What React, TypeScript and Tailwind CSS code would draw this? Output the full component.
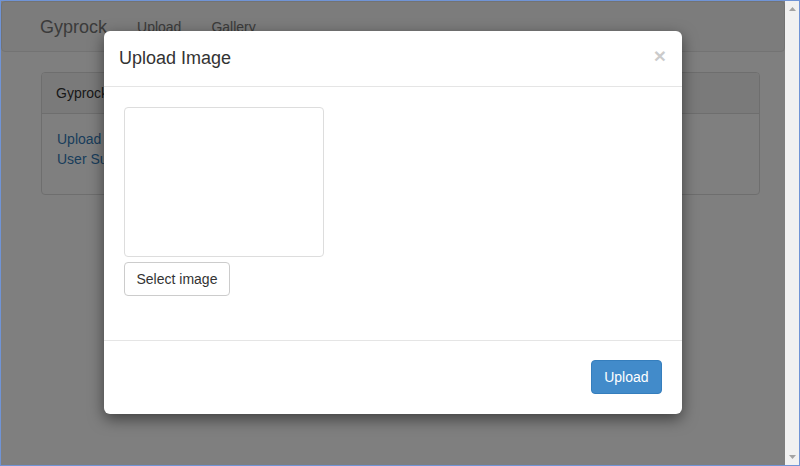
const FONT = "font-['Liberation_Sans',Arial,sans-serif]";

function Page() {
  return (
    <div>
      <nav className="flex h-[51px] items-center rounded-[4px] border border-[#e7e7e7] bg-[#f8f8f8]">
        <a className="pl-[38px] pr-[15px] text-[18px] leading-[20px] text-[#777]">Gyprock</a>
        <a className="px-[15px] leading-[20px] text-[#777]">Upload</a>
        <a className="px-[15px] leading-[20px] text-[#777]">Gallery</a>
      </nav>
      <div className="ml-[40px] mt-[20px] w-[719px] rounded-[4px] border border-[#ddd] bg-white">
        <div className="rounded-t-[3px] border-b border-[#ddd] bg-[#f5f5f5] px-[14px] py-[10px] leading-[20px] text-[#333]">
          Gyprock Image Uploader
        </div>
        <div className="p-[15px]">
          <ul className="mb-[10px] leading-[20px] text-[#337ab7]">
            <li>
              <a>Upload Image</a>
            </li>
            <li>
              <a>User Submissions</a>
            </li>
          </ul>
        </div>
      </div>
    </div>
  );
}

function Modal() {
  return (
    <div className="absolute left-[103px] top-[30px] w-[578px] rounded-[6px] bg-white shadow-[0_5px_15px_rgba(0,0,0,0.5)]">
      <div className="flex h-[56px] items-center justify-between border-b border-[#e5e5e5] pl-[15px] pr-[16px]">
        <h4 className="-mt-[1px] text-[18px] leading-[26px] text-[#333]">Upload Image</h4>
        <button className="-mt-[6px] text-[21px] font-bold leading-none text-black opacity-20">×</button>
      </div>
      <div className="px-[20px] pb-[44px] pt-[20px]">
        <div className="h-[150px] w-[200px] rounded-[4px] border border-[#ddd] bg-white" />
        <button className="mt-[5px] h-[34px] rounded-[4px] border border-[#ccc] bg-white px-[11.5px] text-[14px] text-[#333]">
          Select image
        </button>
      </div>
      <div className="flex justify-end border-t border-[#e5e5e5] pb-[20px] pr-[20px] pt-[19px]">
        <button className="h-[34px] rounded-[4px] border border-[#357ebd] bg-[#428bca] px-[12.5px] text-[14px] text-white">
          Upload
        </button>
      </div>
    </div>
  );
}

function Scrollbar() {
  return (
    <div className="flex w-[14px] flex-col items-center justify-between bg-[#f1f1f1] py-[6px]">
      <svg width="7" height="4" viewBox="0 0 7 4">
        <path d="M3.5 0L7 4H0z" fill="#a3a3a3" />
      </svg>
      <svg width="7" height="4" viewBox="0 0 7 4">
        <path d="M0 0h7L3.5 4z" fill="#a3a3a3" />
      </svg>
    </div>
  );
}

export default function App() {
  return (
    <div className={`h-[466px] w-[800px] overflow-hidden border border-[#7094d6] bg-white text-[14px] text-[#333] ${FONT}`}>
      <div className="flex h-full">
        <div className="relative flex-1 overflow-hidden">
          <Page />
          <div className="absolute inset-0 bg-black/50" />
          <Modal />
        </div>
        <Scrollbar />
      </div>
    </div>
  );
}
